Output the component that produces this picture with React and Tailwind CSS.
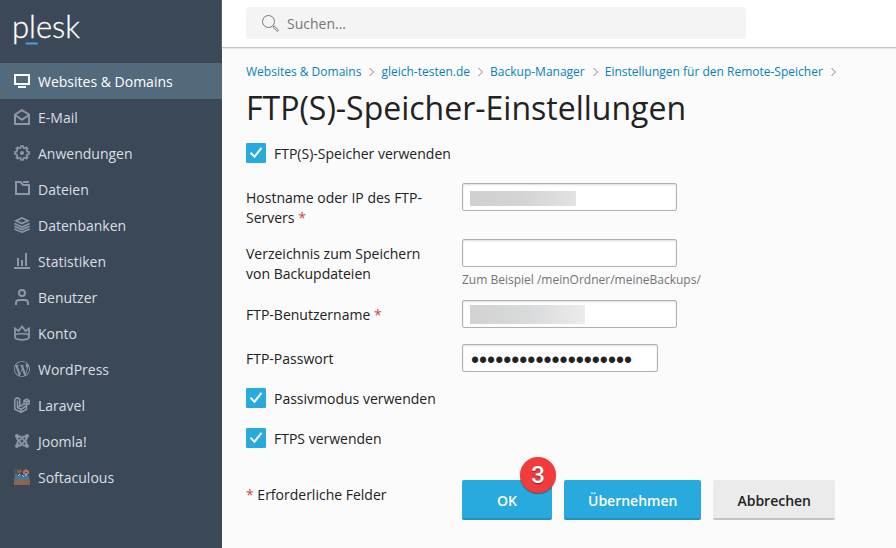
import { useState } from 'react';
import { FaJoomla } from 'react-icons/fa';
import { SiWordpress } from 'react-icons/si';

const NAV_ITEMS = [
  { label: 'Websites & Domains', Icon: MonitorIcon, active: true },
  { label: 'E-Mail', Icon: MailIcon },
  { label: 'Anwendungen', Icon: GearIcon },
  { label: 'Dateien', Icon: FolderIcon },
  { label: 'Datenbanken', Icon: LayersIcon },
  { label: 'Statistiken', Icon: StatsIcon },
  { label: 'Benutzer', Icon: UserIcon },
  { label: 'Konto', Icon: CrownIcon },
  { label: 'WordPress', Icon: SiWordpress },
  { label: 'Laravel', Icon: LaravelIcon },
  { label: 'Joomla!', Icon: FaJoomla },
  { label: 'Softaculous', Icon: SoftaculousIcon },
];

const BREADCRUMBS = [
  'Websites & Domains',
  'gleich-testen.de',
  'Backup-Manager',
  'Einstellungen für den Remote-Speicher',
];

export default function App() {
  return (
    <div className="flex min-h-screen bg-[#fbfbfb] font-['Open_Sans',sans-serif] text-sm leading-5 text-[#222]">
      <Sidebar />
      <div className="flex min-w-0 flex-1 flex-col">
        <SearchHeader />
        <main className="px-6 pt-4 pb-7">
          <Breadcrumbs />
          <h1 className="mt-2 mb-[15px] text-[32px] leading-10">FTP(S)-Speicher-Einstellungen</h1>
          <SettingsForm />
        </main>
      </div>
    </div>
  );
}

function Sidebar() {
  return (
    <aside className="w-[222px] shrink-0 bg-[#3a4858]">
      <a href="#" aria-label="plesk" className="block h-[63px] px-3 pt-2">
        <svg width="72" height="42" viewBox="0 0 72 42" aria-hidden="true">
          <text x="0" y="30" fill="#fff" stroke="#fff" strokeWidth=".3" className="font-['Lato',sans-serif] text-[31px] font-light">plesk</text>
          <path d="M14.5 35.5H25" stroke="#4ba3dc" strokeWidth="2" strokeLinecap="round" />
        </svg>
      </a>
      <nav>
        {NAV_ITEMS.map(({ label, Icon, active }) => (
          <a
            key={label}
            href="#"
            className={`flex h-9 items-center gap-2 px-3.5 ${active ? 'bg-[#536a7c] text-white' : 'text-[#dcdfe2]'}`}
          >
            <Icon className={`size-4 shrink-0 ${active ? 'text-white' : 'text-[#8d98a4]'}`} />
            <span className="pt-px">{label}</span>
          </a>
        ))}
      </nav>
    </aside>
  );
}

function SearchHeader() {
  return (
    <header className="border-b border-[#c4c4c4] bg-white px-6 pt-[7px] pb-2 shadow-[0_1px_1px_#e6e6e6]">
      <label className="flex h-8 max-w-[500px] items-center gap-2 rounded-sm bg-[#f4f4f4] px-4">
        <SearchIcon />
        <input
          type="search"
          aria-label="Suchen"
          placeholder="Suchen..."
          className="min-w-0 flex-1 bg-transparent pt-px outline-none placeholder:text-[#757575]"
        />
      </label>
    </header>
  );
}

function Breadcrumbs() {
  return (
    <nav className="flex h-4 items-center text-xs leading-4 text-[#0a80b8]">
      {BREADCRUMBS.map((item) => (
        <span key={item} className="flex items-center whitespace-nowrap">
          <a href="#">{item}</a>
          <svg width="20" height="10" viewBox="0 0 20 10" fill="none" stroke="#888" aria-hidden="true">
            <path d="M8.5 1l4 4-4 4" />
          </svg>
        </span>
      ))}
    </nav>
  );
}

function SettingsForm() {
  const [password, setPassword] = useState('aaaaaaaaaaaaaaaaaaaa');

  return (
    <form onSubmit={(e) => e.preventDefault()}>
      <Checkbox label="FTP(S)-Speicher verwenden" />

      <div className="mt-5 mb-[11px] space-y-[11px]">
        <Field id="host" label="Hostname oder IP des FTP-Servers" required>
          <TextInput id="host" />
          <span className="absolute top-2 left-2 h-[15px] w-[106px] bg-linear-to-r from-[#d0d0d0] via-[#d4d4d4] to-[#e2e2e2]" />
        </Field>
        <Field id="dir" label="Verzeichnis zum Speichern von Backupdateien">
          <TextInput id="dir" />
          <p className="-mb-1 pt-[5px] text-xs leading-4 text-[#737373]">Zum Beispiel /meinOrdner/meineBackups/</p>
        </Field>
        <Field id="user" label="FTP-Benutzername" required>
          <TextInput id="user" />
          <span className="absolute top-[5px] left-2 h-[19px] w-[115px] bg-linear-to-r from-[#d2d2d2] via-[#d9dadb] to-[#ececec]" />
        </Field>
        <Field id="password" label="FTP-Passwort">
          <input
            id="password"
            type="password"
            value={password}
            onChange={(e) => setPassword(e.target.value)}
            className="block h-7 w-[196px] rounded-xs border border-[#b0b0b0] bg-white px-2 pt-1 font-['Liberation_Sans',sans-serif] text-[23px] shadow-[inset_0_1px_2px_#ddd] outline-none"
          />
        </Field>
      </div>

      <div className="space-y-5">
        <Checkbox label="Passivmodus verwenden" />
        <Checkbox label="FTPS verwenden" />
      </div>

      <div className="mt-8 flex">
        <p className="w-[216px] shrink-0 pt-[5px]">
          <span className="text-[#d0444c]">*</span> Erforderliche Felder
        </p>
        <div className="flex gap-3">
          <div className="relative">
            <button type="submit" className="h-10 w-[90px] rounded-xs border-b-2 border-[#2490c0] bg-[#28aade] pt-1 font-semibold text-white">
              OK
            </button>
            <span className="absolute -top-[23px] -right-1 flex size-9 items-center justify-center rounded-full bg-[#f23b3d] font-['Roboto',sans-serif] text-2xl font-medium text-white shadow-[0_1px_1px_#0006] text-shadow-[0_1px_1px_#0008]">
              3
            </span>
          </div>
          <button type="button" className="h-10 rounded-xs border-b-2 border-[#2490c0] bg-[#28aade] px-6 pt-1 font-semibold text-white">
            Übernehmen
          </button>
          <button type="button" className="h-10 rounded-xs border-b-2 border-[#c4c4c4] bg-[#ebebeb] px-6 pt-1 font-semibold">
            Abbrechen
          </button>
        </div>
      </div>
    </form>
  );
}

function Field({ id, label, required, children }) {
  return (
    <div className="flex">
      <label htmlFor={id} className="w-[216px] shrink-0 pt-[5px] pr-8">
        {label}
        {required && <span className="text-[#d0444c]"> *</span>}
      </label>
      <div className="relative pb-[5px]">{children}</div>
    </div>
  );
}

function TextInput({ id }) {
  return (
    <input
      id={id}
      type="text"
      className="block h-7 w-[215px] rounded-xs border border-[#b0b0b0] bg-white px-2 shadow-[inset_0_1px_2px_#ddd] outline-none"
    />
  );
}

function Checkbox({ label }) {
  return (
    <label className="flex h-5 items-center gap-2">
      <span className="relative size-5">
        <input type="checkbox" defaultChecked className="peer block size-5 appearance-none rounded-[1px] border border-[#b0b0b0] bg-white checked:border-[#28aade] checked:bg-[#28aade]" />
        <svg
          viewBox="0 0 20 20"
          fill="none"
          stroke="#fff"
          strokeWidth="2"
          className="pointer-events-none absolute inset-0 hidden size-5 peer-checked:block"
          aria-hidden="true"
        >
          <path d="M4.5 9.8l4 4 7-9" />
        </svg>
      </span>
      <span className="pt-0.5">{label}</span>
    </label>
  );
}

function SearchIcon() {
  return (
    <svg width="17" height="17" viewBox="0 0 17 17" fill="none" stroke="#777" aria-hidden="true">
      <circle cx="6.5" cy="6.5" r="6" />
      <path d="M10.8 10.8l1.2 1.2" />
      <path d="M11.3 12.5l1.2-1.2 3.6 3.4a.8.8 0 0 1-1.2 1.3z" />
    </svg>
  );
}

function LineIcon({ className, children }) {
  return (
    <svg viewBox="0 0 16 16" fill="none" stroke="currentColor" strokeWidth="2" className={className} aria-hidden="true">
      {children}
    </svg>
  );
}

function MonitorIcon({ className }) {
  return (
    <LineIcon className={className}>
      <path d="M1 2h14v9H1z" />
      <path d="M4 14h8" />
    </LineIcon>
  );
}

function MailIcon({ className }) {
  return (
    <LineIcon className={className}>
      <path d="M1 5.5L8 1.2l7 4.3V15H1z" />
      <path d="M1.5 6.2L8 10.8l6.5-4.6" />
    </LineIcon>
  );
}

function GearIcon({ className }) {
  return (
    <LineIcon className={className}>
      <path
        d="M6.6 2.8L7 1h2l.4 1.8 1.5.6 1.4-1 1.3 1.3-1 1.4.6 1.5 1.8.4v2l-1.8.4-.6 1.5 1 1.4-1.3 1.3-1.4-1-1.5.6L9 15H7l-.4-1.8-1.5-.6-1.4 1-1.3-1.3 1-1.4-.6-1.5L1 9V7l1.8-.4.6-1.5-1-1.4 1.3-1.3 1.4 1z"
        strokeWidth="1.7"
      />
      <circle cx="8" cy="8" r="2" fill="currentColor" stroke="none" />
    </LineIcon>
  );
}

function FolderIcon({ className }) {
  return (
    <LineIcon className={className}>
      <path d="M2 1h4.5L9 4h6v9H2z" />
      <path d="M9 1h6" />
    </LineIcon>
  );
}

function LayersIcon({ className }) {
  return (
    <LineIcon className={className}>
      <path d="M8 1l6 2.8-6 2.8-6-2.8z" strokeWidth="1.8" />
      <path d="M.4 6.5L8 10l7.6-3.5M.4 9.2L8 12.6l7.6-3.4M.4 11.9L8 15.2l7.6-3.3" strokeWidth="1.6" />
    </LineIcon>
  );
}

function StatsIcon({ className }) {
  return (
    <LineIcon className={className}>
      <path d="M0 15h16M4 13V5M8 13V7M12 13V0" />
    </LineIcon>
  );
}

function UserIcon({ className }) {
  return (
    <LineIcon className={className}>
      <circle cx="8" cy="4" r="3" />
      <path d="M2 16v-2a3 3 0 0 1 3-3h6a3 3 0 0 1 3 3v2" />
    </LineIcon>
  );
}

function CrownIcon({ className }) {
  return (
    <LineIcon className={className}>
      <path d="M1 3.5L4.5 6 8 1.5 11.5 6 15 3.5v9.2c-1.5 2.9-12.5 2.9-14 0z" strokeWidth="1.8" />
      <path d="M1 10c2.500-1.600 11.500-1.600 14 0" strokeWidth="1.6" />
    </LineIcon>
  );
}

function LaravelIcon({ className }) {
  return (
    <LineIcon className={className}>
      <g strokeWidth="1.6" strokeLinejoin="round">
        <path d="M.8 2.200L3.300.8l2.500 1.400v7.200l-2 1.100M.8 2.200v10L7 15.300l5.500-3V8.800M3.500 3.500v7L7 12.200l5.500-3.400M7 12.200v3.100M5.800 9.400L10 7" />
        <path d="M10 3.600l2.700-1.400 2.600 1.400v3L12.700 8 10 6.600zM10 3.600L12.700 5l2.600-1.400M12.700 5v3" />
      </g>
    </LineIcon>
  );
}

function SoftaculousIcon({ className }) {
  return (
    <svg viewBox="0 0 16 16" className={className} aria-hidden="true">
      <path d="M0 0h7v10H0z" fill="#4b5560" />
      <path d="M3 2l4-1.500 1 2L4 4z" fill="#a05c35" />
      <path d="M9 2l3-2 3 2v3h-2V3h-2v2H9z" fill="#b9744f" />
      <path d="M1 5h2l1 3 2-4 2 4 2-3 2-1 3 3v3H1z" fill="#3c78a8" />
      <path d="M4 7l2-2M8 6l2 2M12 4v3" stroke="#a8c9df" />
      <path d="M0 10h16v6H0z" fill="#8a654a" />
      <path d="M4 14l2-2M8 14l3-2" stroke="#75797b" />
    </svg>
  );
}
